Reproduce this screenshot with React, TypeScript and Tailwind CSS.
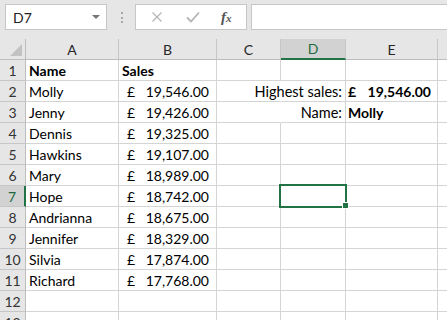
import { Fragment } from "react";

type Row = {
  a?: string;
  b?: string;
  d?: string;
  e?: string;
  bold?: boolean;
  eMoney?: boolean;
};

const ROWS: Row[] = [
  { a: "Name", b: "Sales", bold: true },
  { a: "Molly", b: "19,546.00", d: "Highest sales:", e: "19,546.00", eMoney: true },
  { a: "Jenny", b: "19,426.00", d: "Name:", e: "Molly" },
  { a: "Dennis", b: "19,325.00" },
  { a: "Hawkins", b: "19,107.00" },
  { a: "Mary", b: "18,989.00" },
  { a: "Hope", b: "18,742.00" },
  { a: "Andrianna", b: "18,675.00" },
  { a: "Jennifer", b: "18,329.00" },
  { a: "Silvia", b: "17,874.00" },
  { a: "Richard", b: "17,768.00" },
  {},
  {},
];

const COLS = ["A", "B", "C", "D", "E"];
const SELECTED_ROW = 7;

export default function App() {
  return (
    <div className="relative h-[320px] w-[447px] overflow-hidden bg-white font-['Lato',sans-serif] text-[14px] text-black">
      {/* formula bar */}
      <div className="flex h-[39px] items-start bg-[#e6e6e6] pt-[4px]">
        <div className="ml-[5px] flex h-[26px] w-[102px] items-center justify-between border border-[#c6c6c6] bg-white pl-[7px] pr-[6px]">
          <span className="text-[14px] text-[#222]">D7</span>
          <span className="h-0 w-0 border-x-[4px] border-t-[4px] border-x-transparent border-t-[#777]" />
        </div>
        <div className="ml-[14px] mt-[8px] flex flex-col gap-[2.5px]">
          <span className="h-[2px] w-[2px] bg-[#a8a8a8]" />
          <span className="h-[2px] w-[2px] bg-[#a8a8a8]" />
          <span className="h-[2px] w-[2px] bg-[#a8a8a8]" />
        </div>
        <div className="ml-[12px] flex h-[26px] w-[112px] items-center border border-[#c6c6c6] bg-white">
          <svg viewBox="0 0 12 12" className="ml-[15px] h-[12px] w-[12px]" aria-hidden>
            <path d="M1.5 1.5 10.5 10.5M10.5 1.5 1.5 10.5" stroke="#b4b4b4" strokeWidth={1.2} fill="none" />
          </svg>
          <svg viewBox="0 0 14 12" className="ml-[23px] h-[12px] w-[14px]" aria-hidden>
            <path d="M1 6.5 5 10.5 13 1.5" stroke="#b4b4b4" strokeWidth={1.8} fill="none" />
          </svg>
          <span className="ml-[21px] font-['Liberation_Serif',serif] text-[15px] font-bold italic text-[#555]">
            f<span className="text-[11px]">x</span>
          </span>
        </div>
        <div className="ml-[4px] h-[26px] flex-1 border-y border-l border-[#c6c6c6] bg-white" />
      </div>

      {/* sheet */}
      <div className="grid grid-cols-[26px_93px_98px_64px_65px_92px_1fr]">
        {/* column headers */}
        <div className="relative h-[21px] border-r border-b border-[#bdbdbd] bg-[#e6e6e6]">
          <svg viewBox="0 0 12 12" className="absolute right-[3px] bottom-[3px] h-[12px] w-[12px]" aria-hidden>
            <path d="M12 0 12 12 0 12Z" fill="#c2c2c2" />
          </svg>
        </div>
        {COLS.map((c) => (
          <div
            key={c}
            className={`flex h-[21px] items-center justify-center border-r border-[#c6c6c6] text-[14px] ${
              c === "D"
                ? "border-b-2 border-b-[#217346] bg-[#d2d2d2] text-[#1e6b3f]"
                : "border-b border-b-[#bdbdbd] bg-[#e6e6e6] text-[#262626]"
            }`}
          >
            {c}
          </div>
        ))}
        <div className="h-[21px] border-b border-[#bdbdbd] bg-[#e6e6e6]" />

        {/* rows */}
        {ROWS.map((r, i) => {
          const n = i + 1;
          const sel = n === SELECTED_ROW;
          return (
            <Fragment key={n}>
              <div
                className={`flex h-[21px] items-center justify-center border-b border-[#c6c6c6] pt-[1px] text-[14px] ${
                  sel
                    ? "border-r-2 border-r-[#217346] bg-[#d2d2d2] text-[#1e6b3f]"
                    : "border-r border-r-[#bdbdbd] bg-[#e6e6e6] text-[#333]"
                }`}
              >
                {n}
              </div>
              <div className={`h-[21px] border-r border-b border-[#d4d4d4] pl-[3px] leading-[21px] ${r.bold ? "font-bold" : ""}`}>
                {r.a}
              </div>
              {r.bold ? (
                <div className="h-[21px] border-r border-b border-[#d4d4d4] pl-[3px] font-bold leading-[21px]">{r.b}</div>
              ) : r.b ? (
                <div className="flex h-[21px] justify-between border-r border-b border-[#d4d4d4] pl-[8px] pr-[7px] leading-[21px]">
                  <span>£</span>
                  <span>{r.b}</span>
                </div>
              ) : (
                <div className="h-[21px] border-r border-b border-[#d4d4d4]" />
              )}
              {/* C + D: D text overflows into C, right aligned */}
              <div className="col-span-2 flex h-[21px] leading-[21px]">
                <div
                  className={`h-[21px] w-[64px] shrink-0 border-r border-b border-b-[#d4d4d4] ${
                    r.d ? "border-r-transparent" : "border-r-[#d4d4d4]"
                  }`}
                />
                <div className="relative h-[21px] w-[65px] shrink-0 border-r border-b border-[#d4d4d4]">
                  {r.d && <span className="absolute right-[3px] whitespace-nowrap text-[14.5px]">{r.d}</span>}
                </div>
              </div>
              {r.eMoney ? (
                <div className="flex h-[21px] justify-between border-r border-b border-[#d4d4d4] pl-[2px] pr-[6px] font-bold leading-[21px]">
                  <span>£</span>
                  <span>{r.e}</span>
                </div>
              ) : (
                <div className="h-[21px] border-r border-b border-[#d4d4d4] pl-[2px] font-bold leading-[21px]">{r.e}</div>
              )}
              <div className="h-[21px] border-b border-[#d4d4d4]" />
            </Fragment>
          );
        })}
      </div>

      {/* active cell D7 */}
      <div className="absolute left-[279px] top-[184px] h-[24px] w-[68px] border-2 border-[#217346]" />
      <div className="absolute left-[342px] top-[202px] h-[7px] w-[7px] border border-white bg-[#217346]" />
    </div>
  );
}
